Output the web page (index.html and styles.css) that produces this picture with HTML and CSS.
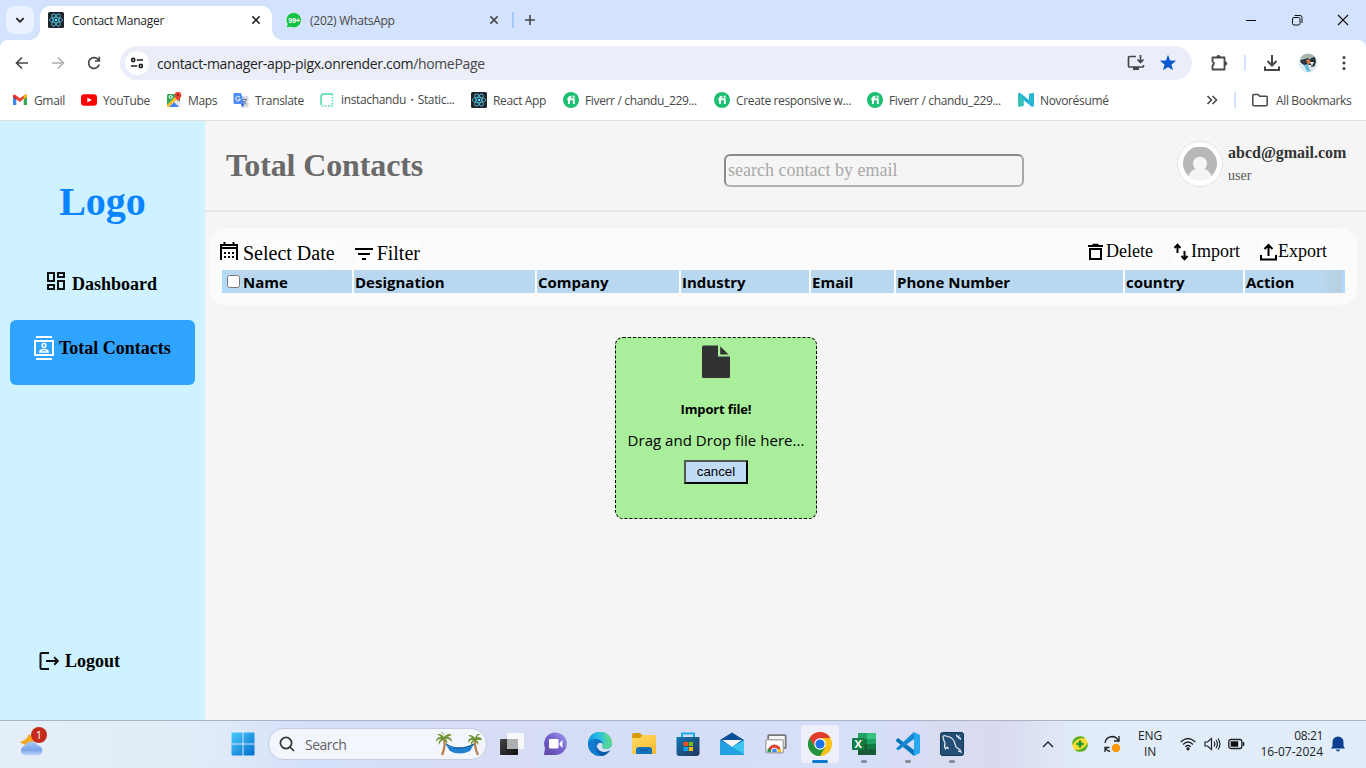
FILE: index.html
```html
<!DOCTYPE html>
<html lang="en">
<head>
<meta charset="utf-8">
<title>Contact Manager</title>
<link rel="stylesheet" href="styles.css">
</head>
<body>
<svg width="0" height="0" class="defs">
  <symbol id="react" viewBox="0 0 16 16"><rect width="16" height="16" rx="1.5" fill="#20232a"/><g fill="none" stroke="#4fb3cc" stroke-width=".9"><ellipse cx="8" cy="8" rx="6.7" ry="2.6"/><ellipse cx="8" cy="8" rx="6.7" ry="2.6" transform="rotate(60 8 8)"/><ellipse cx="8" cy="8" rx="6.7" ry="2.6" transform="rotate(120 8 8)"/></g><circle cx="8" cy="8" r="1.3" fill="#61dafb"/></symbol>
  <symbol id="fiverr" viewBox="0 0 16 16"><circle cx="8" cy="8" r="8" fill="#1dbf73"/><path d="M4.200 7.300h6.600V12M6 12V6.300q0-1.700 2.400-1.600" fill="none" stroke="#fff" stroke-width="1.900"/><circle cx="10.700" cy="4.700" r="1.100" fill="#fff"/></symbol>
</svg>

<header class="tabstrip">
  <div class="tab-search"><svg width="10" height="10" viewBox="0 0 10 10"><path d="M1.3 3.2 5 6.8l3.7-3.6" fill="none" stroke="#1f1f1f" stroke-width="1.8"/></svg></div>
  <div class="tab active">
    <svg width="16" height="16"><use href="#react"/></svg><span class="tab-title">Contact Manager</span>
    <svg class="close" width="10" height="10" viewBox="0 0 10 10"><path d="m1.4 1.4 7.2 7.2m0-7.2L1.4 8.6" stroke="#1f1f1f" stroke-width="1.5"/></svg>
  </div>
  <div class="tab idle">
    <svg width="16" height="16" viewBox="0 0 16 16"><path d="M.3 15.7 1.2 12A7.600 7.600 0 1 1 4.5 15Z" fill="#12c143" stroke="#fff" stroke-width=".6"/><text x="8" y="11" text-anchor="middle" class="wa-count">99+</text></svg><span class="tab-title">(202) WhatsApp</span>
    <svg class="close" width="10" height="10" viewBox="0 0 10 10"><path d="m1.4 1.4 7.2 7.2m0-7.2L1.4 8.6" stroke="#474747" stroke-width="1.5"/></svg>
  </div>
  <i class="tab-sep"></i>
  <svg width="12" height="12" viewBox="0 0 12 12"><path d="M6 1v10M1 6h10" stroke="#474747" stroke-width="1.6"/></svg>
  <div class="window-buttons">
    <svg width="12" height="12" viewBox="0 0 12 12"><path d="M1 6.5h10" stroke="#111"/></svg>
    <svg width="12" height="12" viewBox="0 0 12 12" fill="none" stroke="#111"><rect x="1.5" y="3.5" width="7.5" height="7.5" rx="1.5"/><path d="M3.5 1.5H9q2 0 2 2V9"/></svg>
    <svg width="12" height="12" viewBox="0 0 12 12"><path d="m1 1 10 10M11 1 1 11" stroke="#111" stroke-width="1.1"/></svg>
  </div>
</header>

<section class="browser">
  <div class="toolbar">
    <svg width="16" height="16" viewBox="0 0 16 16" fill="none" stroke="#474747" stroke-width="1.7"><path d="M14 8H3M8 2.5 2.5 8 8 13.5"/></svg>
    <svg width="16" height="16" viewBox="0 0 16 16" fill="none" stroke="#b0b0b0" stroke-width="1.6"><path d="M2 8h11M8 2.5 13.500 8 8 13.500"/></svg>
    <svg width="16" height="16" viewBox="0 0 16 16" fill="none" stroke="#474747" stroke-width="1.7"><path d="M13.200 9.500A5.400 5.400 0 1 1 12.500 5M13.300 1.800V6H9"/></svg>
    <div class="omnibox">
      <span class="site"><svg width="14" height="12" viewBox="0 0 14 12" fill="none" stroke="#1f1f1f" stroke-width="1.6"><circle cx="3.200" cy="3" r="1.600"/><path d="M6.800 3H13M1 9h6.200"/><circle cx="10.800" cy="9" r="1.600"/></svg></span>
      <span class="url">contact-manager-app-pigx.onrender.com<em>/homePage</em></span>
      <svg class="install" width="18" height="16" viewBox="0 0 18 16"><path d="M9 1.500H2.500a1 1 0 0 0-1 1v8.500a1 1 0 0 0 1 1h13a1 1 0 0 0 1-1V10M13.500 0v7M10.500 4.500l3 3 3-3" fill="none" stroke="#474747" stroke-width="1.700"/><path d="M6 12h6v3H6Z" fill="#474747"/></svg>
      <svg width="18" height="18" viewBox="0 0 18 18"><path d="m9 .8 2.100 5.700 6.100.2-4.800 3.800 1.700 5.800L9 12.900l-5.100 3.400 1.700-5.800L.8 6.700l6.100-.2Z" fill="#0b57d0"/></svg>
    </div>
    <svg class="puzzle" width="18" height="18" viewBox="0 0 18 18"><path d="M2.500 3.500h12v12h-12v-4q2.700-2 0-4Z" fill="none" stroke="#474747" stroke-width="1.800" stroke-linejoin="round"/><path d="M6.300 3.200q.2-2.200 2.200-2.200t2.200 2.200ZM15 7.300q2.300.2 2.300 2.200T15 11.700Z" fill="#474747"/></svg>
    <i class="bar-sep"></i>
    <svg class="download" width="18" height="18" viewBox="0 0 18 18" fill="none" stroke="#474747" stroke-width="2"><path d="M9 1v10M4.500 7 9 11.500 13.500 7M2 12.500v3.600h14v-3.600"/></svg>
    <svg class="profile" width="20" height="20" viewBox="0 0 20 20"><circle cx="10" cy="10" r="9.500" fill="#dcecf2"/><path d="M2 6Q5 0 11 .8q5 .6 6.500 5L9 5Z" fill="#a9b5a9"/><path d="m2 7 8-2 5 2 2 5-4 3-3-2-4-1-3-2Z" fill="#2c3540"/><path d="m8 7 3-1 2 4-3 2Z" fill="#d3794d"/><path d="m6 12 4-1 3 7-4 1Z" fill="#68bddc"/><path d="m13 5 4-1 1 5-2 5-3-4Z" fill="#26333d"/><path d="m12 9 2 4 2-4Z" fill="#eee"/><path d="m10 12 3 0 1 4-2 1Z" fill="#eef4f7"/></svg>
    <svg class="menu" width="16" height="16" viewBox="0 0 16 16" fill="#474747"><circle cx="8" cy="2.500" r="1.600"/><circle cx="8" cy="8" r="1.600"/><circle cx="8" cy="13.500" r="1.600"/></svg>
  </div>
  <nav class="bookmarks">
    <a class="w69"><svg width="16" height="16" viewBox="0 0 16 16"><path d="M1 13V4l3.300 2.500V13Z" fill="#4285f4"/><path d="M11.700 13V6.500L15 4v9Z" fill="#34a853"/><path d="M1 5V3.500Q2 1.800 3.600 3L8 6.300 12.400 3Q14 1.800 15 3.500L8 10 1 5Z" fill="#ea4335"/><path d="m11.700 3.500 1-.7Q15 2 15 4.500V5l-3.300 2.500Z" fill="#fbbc04"/><path d="M1 5V3.500l3.300 2.800v1.500Z" fill="#c5221f"/></svg><span>Gmail</span></a>
    <a class="w85"><svg width="16" height="16" viewBox="0 0 16 16"><rect y="2.300" width="16" height="11.400" rx="3" fill="#f00"/><path d="m6.300 5.500 4.500 2.500-4.500 2.500Z" fill="#fff"/></svg><span>YouTube</span></a>
    <a class="w67"><svg width="16" height="16" viewBox="0 0 16 16"><rect x="1" y="2" width="13" height="13" rx="1.500" fill="#34a853"/><path d="M1 15 10 5l4 5v5Z" fill="#e5e5e5"/><path d="m3 15 5-5 5 5Z" fill="#4285f4"/><path d="m1 13 8-8 2 2-8 8H1Z" fill="#fbc02d"/><circle cx="4.700" cy="5" r="1.500" fill="none" stroke="#fff"/><path d="M12 9Q8.500 5.500 8.700 3.200A3.300 3.300 0 0 1 15.300 3Q15.400 5.500 12 9Z" fill="#e94235"/><circle cx="12" cy="3.200" r="1.100" fill="#8b1c15"/></svg><span>Maps</span></a>
    <a class="w86"><svg width="16" height="16" viewBox="0 0 16 16"><path d="M7 4h7q1.500 0 1.500 1.500v9q0 1-1 1H9Z" fill="#dadce0"/><path d="M1.500 1H8l3.500 11H1.500Q.5 12 .5 11V2q0-1 1-1Z" fill="#4c8bf5"/><path d="m8 12 3.500 0L9 15.500Z" fill="#3367d6"/><path d="M7 5.200A2.300 2.300 0 1 0 7.400 7H5.300" fill="none" stroke="#fff"/><path d="M9.500 7.500H14M12 6.500v1M13.400 7.500Q12 11 9.800 12M10.500 9l3 3.500" fill="none" stroke="#718096"/></svg><span>Translate</span></a>
    <a class="w152"><svg width="16" height="16" viewBox="0 0 16 16" fill="none" stroke="#3fe0a2" stroke-width="1.500"><path d="M13.500 2H5Q2 2 2 5v8"/><path d="M13.500 2v12H2" stroke-dasharray="1.500 1.500"/></svg><span class="static">instachandu・Static...</span></a>
    <a class="w92"><svg width="16" height="16"><use href="#react"/></svg><span>React App</span></a>
    <a class="w151"><svg width="16" height="16"><use href="#fiverr"/></svg><span>Fiverr / chandu_229...</span></a>
    <a class="w153"><svg width="16" height="16"><use href="#fiverr"/></svg><span>Create responsive w...</span></a>
    <a class="w151"><svg width="16" height="16"><use href="#fiverr"/></svg><span>Fiverr / chandu_229...</span></a>
    <a class="w151"><svg width="16" height="16" viewBox="0 0 16 16"><path d="M0 2q1-2 3-.5L11 8V1.500l5-.5v13q-1 1.500-3 .2L5.500 8v6L0 14.500Z" fill="#25b7d3"/><path d="M0 2v12.500l5.500-.5V8Z" fill="#38c4b4"/></svg><span>Novorésumé</span></a>
    <svg class="more" width="12" height="10" viewBox="0 0 12 10"><path d="m1.500 1 4 4-4 4m5-8 4 4-4 4" fill="none" stroke="#474747" stroke-width="1.600"/></svg>
    <i class="bar-sep"></i>
    <a class="all"><svg width="16" height="16" viewBox="0 0 16 16"><path d="M.8 3.500q0-1 1-1h4.400l1.500 1.700h6.500q1 0 1 1v7.500q0 1-1 1H1.800q-1 0-1-1Z" fill="none" stroke="#474747" stroke-width="1.500"/></svg><span>All Bookmarks</span></a>
  </nav>
</section>

<div class="app">
  <aside class="sidebar">
    <div class="logo">Logo</div>
    <a class="nav dashboard"><svg width="20" height="20" viewBox="0 0 20 20" fill="none" stroke="#111" stroke-width="2"><path d="M2 2h6v8H2ZM12 2h6v4h-6ZM12 10h6v8h-6ZM2 14h6v4H2Z"/></svg><span>Dashboard</span></a>
    <a class="nav contacts"><svg width="20" height="24" viewBox="0 0 20 24" fill="none" stroke="#fff" stroke-width="2"><path d="M2 1h16M2 23h16M1 5h18v14H1Z"/><circle cx="10" cy="9.500" r="1.900" stroke-width="1.500"/><path d="M5.800 16q.4-2.400 4.200-2.400t4.200 2.400Z" stroke-width="1.500"/></svg><span>Total Contacts</span></a>
    <a class="nav logout"><svg width="20" height="20" viewBox="0 0 20 20" fill="none" stroke="#111" stroke-width="2"><path d="M10 2H2.500q-1 0-1 1v14q0 1 1 1H10M7 10h12M15.200 6.300 18.900 10l-3.700 3.700"/></svg><span>Logout</span></a>
  </aside>
  <main class="main">
    <header class="page-head">
      <h1>Total Contacts</h1>
      <input class="search" type="text" placeholder="search contact by email">
      <div class="user">
        <span class="avatar"><svg width="34" height="34" viewBox="0 0 34 34"><circle cx="17" cy="17" r="17" fill="#f5f5f5"/><path d="M5.500 29A17 17 0 1 1 28.500 29Q26.500 23.500 21.500 22a7 7 0 1 0-9 0Q7.500 23.500 5.500 29Z" fill="#b7b7b7"/></svg></span>
        <div class="who"><b>abcd@gmail.com</b><small>user</small></div>
      </div>
    </header>
    <section class="card">
      <div class="tools">
        <span class="tool date"><svg width="18" height="18" viewBox="0 0 18 18" fill="none" stroke="#000" stroke-width="2"><path d="M1 18V3h16v15M1 6h16M4.500 0v3M13.500 0v3"/><path d="M4 11h10M4 15h10" stroke-dasharray="2 2"/></svg>Select Date</span>
        <span class="tool filter"><svg width="18" height="14" viewBox="0 0 18 14" stroke="#000" stroke-width="2"><path d="M0 2h18M3 7h12M7 12h4"/></svg>Filter</span>
        <span class="tool delete"><svg width="15" height="18" viewBox="0 0 15 18" fill="none" stroke="#000" stroke-width="2"><path d="M2 6h11v10H2ZM0 3h15M4.500 1.800h6"/></svg>Delete</span>
        <span class="tool import"><svg width="18" height="18" viewBox="0 0 18 18" fill="none" stroke="#000" stroke-width="2"><path d="M4.500 10V2M1.500 5l3-3.200L7.500 5M11.500 8v8M8.500 13l3 3.200 3-3.200"/></svg>Import</span>
        <span class="tool export"><svg width="17" height="18" viewBox="0 0 17 18" fill="none" stroke="#000" stroke-width="2"><path d="M8.500 13V2M4.500 6l4-4 4 4M1 12v4.500h15V12"/></svg>Export</span>
      </div>
      <div class="thead">
        <div><input type="checkbox">Name</div><div>Designation</div><div>Company</div><div>Industry</div><div>Email</div><div>Phone Number</div><div>country</div><div>Action</div>
      </div>
    </section>
    <section class="dropzone">
      <svg width="28" height="33" viewBox="0 0 28 33"><path d="M1.500.5H16v11h12v20q0 1.500-1.500 1.500h-25Q0 33 0 31.500V2Q0 .5 1.500.5ZM18.200 1.300l8.300 8.300h-8.300Z" fill="#303234"/></svg>
      <h4>Import file!</h4>
      <p>Drag and Drop file here...</p>
      <button>cancel</button>
    </section>
  </main>
</div>

<footer class="taskbar">
  <div class="weather"><svg width="28" height="28" viewBox="0 0 28 28"><defs><linearGradient id="cl" x2="0" y2="1"><stop stop-color="#a9c8fa"/><stop offset=".6" stop-color="#7ba3ea"/><stop offset="1" stop-color="#c8dbfa"/></linearGradient></defs><path d="M2 12q7-2 9-8 6 4 5 14-8 1-9-3-2-1-5-3Z" fill="#f6a81c"/><path d="M7 25.500a5 5 0 0 1 0-9.800 7 7 0 0 1 12.500-.5A5.200 5.200 0 0 1 20 25.500Z" fill="url(#cl)"/></svg><b>1</b></div>
  <div class="start"><svg width="24" height="24" viewBox="0 0 24 24"><defs><linearGradient id="win" x2="1" y2="1"><stop stop-color="#4cc9fc"/><stop offset="1" stop-color="#006fcb"/></linearGradient></defs><path d="M.5 1.500q0-1 1-1h10v11H.5ZM12.500.5h10q1 0 1 1v10h-11ZM.5 12.500h11v11h-10q-1 0-1-1ZM12.500 12.500h11v10q0 1-1 1h-10Z" fill="url(#win)"/></svg></div>
  <div class="tsearch">
    <svg width="16" height="16" viewBox="0 0 16 16" fill="none" stroke="#333" stroke-width="1.700"><circle cx="7" cy="7" r="5.600"/><path d="m11 11 4 4"/></svg><span>Search</span>
    <svg class="palms" width="46" height="26" viewBox="0 0 46 26"><path d="M8 7q2 8-2 17M40 7q-3 6 2 17" fill="none" stroke="#b98050" stroke-width="2.300"/><path d="M10 14q5 3 13 3t15-4l-4 7q-11 5-20 0Z" fill="#2180cf"/><path d="M10 13q12 8 28 0" stroke="#0c579b" fill="none" stroke-width="1.300"/><path d="M8 6Q4 1 1 4q3 0 4 2Q0 6 0 11q3-4 5-3-3 2-2 6 2-5 5-5 2 2 3 4 1-4-2-5 4-1 7 3 0-5-5-5l5-2q-4-3-8 2Q8 1 5 1q3 2 3 5Zm31 1q-4-5-7-2 3 0 4 2-4 0-4 5 3-4 5-3-3 2-2 6 2-5 4-5 2 2 3 4 1-4-2-5h6q0-3-5-3 1-3 4-2-4-3-6 3Z" fill="#6f942f"/></svg>
  </div>
  <div class="apps">
    <span><svg width="24" height="24" viewBox="0 0 24 24"><defs><linearGradient id="tv" x2="1" y2="1"><stop stop-color="#444"/><stop offset="1" stop-color="#111"/></linearGradient></defs><rect x="7" y="1" width="17" height="16" rx="1" fill="#f8f8f8"/><rect x="0" y="7" width="18" height="16" rx="1" fill="url(#tv)"/><path d="M7 7h11v10H7Z" fill="#aeb1b3"/></svg></span>
    <span><svg width="24" height="24" viewBox="0 0 24 24"><defs><linearGradient id="ch" x1="1" x2="0" y2="1"><stop stop-color="#9aa0ed"/><stop offset=".5" stop-color="#7660cc"/><stop offset="1" stop-color="#5c45a2"/></linearGradient></defs><path d="M0 23 1 16A11.300 11.300 0 1 1 12 23Z" fill="url(#ch)"/><rect x="5" y="7" width="9.500" height="9.500" rx="1" fill="#fff"/><path d="m15.500 11 3-3v8l-3-3Z" fill="#fff"/></svg></span>
    <span><svg width="24" height="24" viewBox="0 0 24 24"><defs><linearGradient id="ed" x1="0" y1=".5" x2="1" y2=".3"><stop stop-color="#1496dd"/><stop offset=".5" stop-color="#2bbee4"/><stop offset="1" stop-color="#67e36f"/></linearGradient></defs><circle cx="12" cy="12" r="12" fill="#1473c6"/><path d="M0 12A12 12 0 0 1 24 11q0 6-7 6-4-1-2-4Q14 7 8 7 2 7 0 12Z" fill="url(#ed)"/><path d="M24 12q0 5-7 5-4-1-2-4-1-3-4-2-3 2-2 5 2 4 8 4 4 0 6-2l3 3V12Z" fill="#d6e0f8"/><path d="M24 10q0 7-7 7-4-1-2-4l3-3Z" fill="#50d69b"/><path d="M0 12q2-5 8-4-3 3-2 8 2 5 8 8Q1 24 0 12Z" fill="#117dce"/><path d="M9 15q2 6 8 5 3 0 5-2-3 5-8 6-6-2-5-9Z" fill="#0c59a4"/></svg></span>
    <span><svg width="24" height="24" viewBox="0 0 24 24"><defs><linearGradient id="fo" x2="1" y2="1"><stop stop-color="#ffdc66"/><stop offset="1" stop-color="#fcb92a"/></linearGradient></defs><path d="M0 3q0-2 2-2h6l3 3v3H0Z" fill="#d99a0b"/><path d="M0 6h8l3-3h13v19H0Z" fill="url(#fo)"/><path d="M4 22v-4q0-3 3-3h10q3 0 3 3v4Z" fill="#1174bd"/><path d="M8 18h8" stroke="#0c5a98" stroke-width="1.500"/></svg></span>
    <span><svg width="24" height="24" viewBox="0 0 24 24"><defs><linearGradient id="st" x2="1" y2="1"><stop stop-color="#0e79b5"/><stop offset="1" stop-color="#263458"/></linearGradient></defs><path d="M6 7V1.500h12V7" fill="none" stroke="#1baae6" stroke-width="2"/><path d="M.5 5h23v16q0 3-3 3h-17q-3 0-3-3Z" fill="url(#st)"/><path d="M7.500 10H12v4H7.500Z" fill="#f25022"/><path d="M12.800 10H17v4h-4.200Z" fill="#7fba00"/><path d="M7.500 15H12v4H7.500Z" fill="#00a4ef"/><path d="M12.800 15H17v4h-4.200Z" fill="#ffb900"/></svg></span>
    <span><svg width="24" height="24" viewBox="0 0 24 24"><path d="M0 8 12 .5 24 8v6H0Z" fill="#0b4f99"/><path d="M2 8h20L12 15Z" fill="#f6f6f6"/><path d="m0 8 12 7 12-7v15H0Z" fill="#3bc7f1"/><path d="m0 8 24 14v1H0Z" fill="#23a0e0"/></svg></span>
    <span><svg width="24" height="24" viewBox="0 0 24 24"><defs><clipPath id="rd"><path d="M3 8h16v12H3Z"/></clipPath></defs><rect x="4.200" y="3.200" width="17.500" height="13" rx="1" fill="#f5f5f5" stroke="#777" stroke-width="1.800"/><rect x="1.800" y="7.800" width="17.500" height="13" rx="1" fill="#fff" stroke="#aaa" stroke-width="1.500"/><g clip-path="url(#rd)"><circle cx="10.500" cy="19" r="6.500" fill="#df4335"/><path d="M4 16l6 5H3Z" fill="#24994b"/><path d="M11 17h6v4h-6Z" fill="#fbbc04"/><circle cx="10.500" cy="19" r="3" fill="#4285f4" stroke="#fff"/></g></svg></span>
    <span class="current"><svg width="24" height="24" viewBox="0 0 24 24"><circle cx="12" cy="12" r="12" fill="#fbc116"/><path d="M1.600 6A12 12 0 0 1 22.400 6H12L7 15Z" fill="#e33b2e"/><path d="M1.600 6A12 12 0 0 0 12 24l5.200-9H7Z" fill="#229342"/><circle cx="12" cy="12" r="5.800" fill="#fff"/><circle cx="12" cy="12" r="4.600" fill="#1a73e8"/></svg></span>
    <span class="running"><svg width="24" height="24" viewBox="0 0 24 24"><path d="M6 1h9v6H6Z" fill="#21a366"/><path d="M15 1h9v6h-9Z" fill="#33c481"/><path d="M6 7h9v5H6Z" fill="#107c41"/><path d="M15 7h9v5h-9Z" fill="#21a366"/><path d="M6 12h18v11H6Z" fill="#185c37"/><path d="M15 12h9v5h-9Z" fill="#107c41"/><rect y="6" width="12.500" height="12" rx="1" fill="#107c41"/><text x="6.200" y="15.800" text-anchor="middle" class="excel-x">X</text></svg></span>
    <span class="running"><svg width="24" height="24" viewBox="0 0 24 24"><path d="m0 8 2-2 16 12v6L0 9Z" fill="#0874bd"/><path d="M18 0v7L2 18.500l-2-2L18 0Z" fill="#1688d4"/><path d="m18 0 6 3v18l-6 3Z" fill="#2aa8ef"/></svg></span>
    <span class="running"><svg width="24" height="24" viewBox="0 0 24 24"><rect x=".5" y=".5" width="23" height="23" rx="2" fill="#244e73" stroke="#153651"/><path d="M7 15 5.500 17Q4 15 5 11 3 7 3 5q0-2 3-1 6 1 8 5 1 3 2 6l4 3 1 2-3-1M7 15q1 1 1.500 2" fill="none" stroke="#e6edf3" stroke-width="1.200"/><path d="M16 2v2l2 2 1 1 2 1V6l-2-1 1-2-2 1Z" fill="#dbe7f1"/></svg></span>
  </div>
  <div class="tray">
    <span><svg width="12" height="8" viewBox="0 0 12 8"><path d="m1 7 5-5 5 5" fill="none" stroke="#222" stroke-width="1.400"/></svg></span>
    <span><svg width="16" height="16" viewBox="0 0 16 16"><circle cx="8" cy="8" r="7.800" fill="#f7dc30"/><path d="M.2 9Q-.3 1 8 .2q4 0 5.500 2Q5 1 .2 9ZM15.800 7q.5 8-7.800 8.800-4 0-5.500-2Q11 15 15.800 7Z" fill="#53ad31"/><path d="M8 4.500v7M4.500 8h7" stroke="#18992b" stroke-width="2.400"/></svg></span>
    <span><svg width="18" height="18" viewBox="0 0 18 18" fill="none" stroke="#222" stroke-width="1.300"><path d="M2 8Q3 2 9 1.500q4 0 6.500 4M16 1v5h-5M7 16.500q-3-.5-4-3M2 17v-4.500h4.500"/><circle cx="13" cy="13" r="4.200" fill="#ff9800" stroke="none"/></svg></span>
    <span class="lang">ENG<br>IN</span>
    <span class="sys"><svg width="16" height="14" viewBox="0 0 16 14" fill="none" stroke="#222" stroke-width="1.300"><path d="M.7 5Q8-2 15.300 5M3 7.500q5-5 10 0M5.300 9.800q2.700-2.500 5.400 0"/><circle cx="8" cy="11.800" r="1" fill="#222"/></svg></span>
    <span class="sys"><svg width="17" height="14" viewBox="0 0 17 14" fill="none" stroke="#222" stroke-width="1.200"><path d="M1 5h2.500l4-3.500v11L3.500 9H1ZM10 4.500q1.500 2.500 0 5M12 3q2.800 4 0 8M14 1.500q3.800 5.500 0 11"/></svg></span>
    <span class="sys"><svg width="17" height="12" viewBox="0 0 17 12"><rect x=".8" y="1.500" width="13" height="9" rx="2" fill="none" stroke="#222" stroke-width="1.300"/><rect x="2.700" y="3.300" width="7.500" height="5.400" fill="#111"/><path d="M15.500 4v4" stroke="#222" stroke-width="1.500"/></svg></span>
    <span class="clock">08:21<br><em>16-07-2024</em></span>
    <svg class="bell" width="14" height="16" viewBox="0 0 14 16"><path d="M1.500 6a5.500 5.500 0 0 1 11 0v4l1.500 2.500H0L1.500 10ZM5 13.500h4q-.3 2-2 2t-2-2Z" fill="#0b3f91"/></svg>
  </div>
</footer>
</body>
</html>
```
FILE: styles.css
```css
* { box-sizing: border-box; }
body { margin: 0; width: 1366px; height: 768px; overflow: hidden; display: flex; flex-direction: column; background: #d3e3fd; font-family: "Open Sans", "Noto Sans", sans-serif; }
svg { flex: none; display: block; }
.defs { position: absolute; }

/* tab strip */
.tabstrip { height: 40px; flex: none; display: flex; align-items: center; font-size: 12px; color: #1f1f1f; }
.tab-search { width: 28px; height: 28px; margin-left: 6px; border-radius: 9px; background: #ebf1fe; display: flex; align-items: center; justify-content: center; }
.tab { display: flex; align-items: center; }
.tab.active { position: relative; width: 232px; height: 34px; margin: 6px 0 0 6px; padding: 0 11px 6px 8px; background: #fff; border-radius: 10px 10px 0 0; }
.tab.active::before, .tab.active::after { content: ""; position: absolute; bottom: 0; width: 10px; height: 10px; }
.tab.active::before { left: -10px; background: radial-gradient(circle at 0 0, transparent 9.500px, #fff 10px); }
.tab.active::after { right: -10px; background: radial-gradient(circle at 100% 0, transparent 9.500px, #fff 10px); }
.tab.idle { width: 213px; margin-left: 14px; color: #474747; }
.tab-title { margin-left: 8px; letter-spacing: -.25px; white-space: nowrap; }
.close { margin-left: auto; }
.wa-count { font: bold 7.500px "Liberation Sans", sans-serif; fill: #fff; letter-spacing: -.4px; }
.tab-sep { width: 2px; height: 16px; background: #a8c7fa; margin: 0 10px 0 13px; }
.window-buttons { display: flex; gap: 34px; margin-left: auto; margin-right: 17px; }

/* toolbar and bookmarks */
.browser { height: 81px; flex: none; background: #fff; border-radius: 8px 8px 0 0; border-bottom: 1px solid #dedfe1; }
.toolbar { height: 46px; display: flex; align-items: center; padding-left: 14px; gap: 20px; }
.omnibox { width: 1072px; height: 34px; margin-left: -2px; border-radius: 17px; background: #ebeef8; display: flex; align-items: center; padding: 0 15px 0 5px; }
.site { width: 24px; height: 24px; border-radius: 50%; background: #fff; display: flex; align-items: center; justify-content: center; }
.url { margin-left: 8px; font-size: 14px; letter-spacing: -.34px; color: #1f1f1f; white-space: nowrap; }
.url em { font-style: normal; color: #474747; }
.install { margin-left: auto; margin-right: 14px; }
.puzzle { margin-left: -2px; }
.bar-sep { width: 2px; height: 16px; background: #d3e3fd; }
.toolbar .bar-sep { margin-left: -4px; }
.download { margin-left: -3px; }
.profile { margin-left: -3px; }
.menu { margin-left: -2px; }
.bookmarks { height: 28px; display: flex; align-items: center; padding-left: 12px; font-size: 12px; color: #474747; }
.bookmarks a { display: flex; align-items: center; gap: 6px; white-space: nowrap; letter-spacing: -.35px; }
.bookmarks .static { line-height: 16px; height: 16px; }
.w67 { width: 67px; } .w69 { width: 69px; } .w85 { width: 85px; } .w86 { width: 86px; } .w92 { width: 92px; }
.w151 { width: 151px; } .w152 { width: 152px; } .w153 { width: 153px; }
.more { margin-left: 37px; }
.bookmarks .bar-sep { margin: 0 16px 0 16px; }
.bookmarks .all { gap: 8px; }

/* application */
.app { height: 599px; flex: none; display: flex; font-family: "Liberation Serif", serif; background: #f5f5f5; }
.sidebar { width: 205px; background: #cef2ff; display: flex; flex-direction: column; }
.logo { height: 46px; margin-top: 58px; text-align: center; font-size: 40px; line-height: 46px; font-weight: bold; color: #0a84ff; }
.nav { display: flex; font-size: 18px; line-height: 20px; font-weight: bold; color: #000; }
.nav.dashboard { margin: 46px 0 0 46px; gap: 6px; height: 24px; }
.nav.dashboard span { margin-top: 3px; }
.nav.contacts { margin: 25px 10px 0; height: 65px; padding: 16px 0 0 24px; gap: 5px; background: #2ea4ff; border-radius: 6px; }
.nav.contacts span { margin-top: 2px; }
.nav.logout { margin: auto 0 49px 39px; gap: 6px; }
.main { flex: 1; min-width: 0; }
.page-head { height: 91px; border-bottom: 2px solid #e8e8e8; padding-left: 21px; display: flex; align-items: flex-start; }
.page-head h1 { width: 498px; margin: 26px 0 0; font-size: 32px; line-height: 37px; letter-spacing: -.12px; color: #6a6a6a; }
.search { width: 300px; height: 33px; margin-top: 33px; padding: 1px 2px; border: 2px solid; border-color: #8a8a8a #a8a8a8 #b0b0b0 #8a8a8a; border-radius: 6px; background: transparent; font: 18px "Liberation Serif", serif; }
.search::placeholder { color: #a9a9a9; }
.user { display: flex; margin: 20px 0 0 153px; gap: 5px; }
.avatar { width: 46px; height: 46px; border-radius: 50%; border: 1px solid #e9e1e3; background: #fff; display: flex; align-items: center; justify-content: center; }
.who { display: flex; flex-direction: column; color: #333; }
.who b { font-size: 16px; line-height: 18px; margin-top: 3px; }
.who small { font-size: 14px; line-height: 16px; margin-top: 6px; color: #555; }
.card { width: 1147px; height: 77px; margin: 16px 0 0 5px; padding: 10px 12px 0; border-radius: 16px; background: #fbfbfb; }
.tools { display: flex; align-items: flex-start; height: 32px; margin: 0 18px 0 -2px; }
.tool { background: #fdfdfd; display: flex; align-items: center; font-size: 18px; height: 27px; white-space: nowrap; }
.tool.date, .tool.filter { font-size: 20px; height: 31px; }
.date { gap: 5px; }
.date svg { margin-bottom: 5px; }
.filter { gap: 4px; margin-left: 20px; }
.delete { margin-left: auto; gap: 3px; }
.import { margin-left: 20px; }
.export { margin-left: 20px; gap: 1px; }
.thead { display: grid; grid-template-columns: 130px 181px 142px 128px 83px 227px 118px 100px; column-gap: 2px; height: 23px; }
.thead div { height: 23px; background: #b9d8f0; font: bold 15px/21px "Open Sans", sans-serif; padding: 2px 0 0 1px; display: flex; align-items: center; white-space: nowrap; }
.thead div:first-child { padding-left: 5px; background: linear-gradient(90deg, #b0daf8, #b9d8ef 15px); }
.thead div:last-child { background: linear-gradient(90deg, #b9d8f0 75%, #b8cfdf 96%, #afdcff 98%); }
.thead input { width: 13px; height: 13px; margin: 0 3px 2px 0; }
.dropzone { width: 202px; height: 182px; margin: 32px 0 0 410px; padding-top: 7px; display: flex; flex-direction: column; align-items: center; background: #a9ee9b; border: 1px dashed #000; border-radius: 8px; font-family: "Open Sans", sans-serif; }
.dropzone h4 { margin: 22px 0 0; font-size: 13px; line-height: 18px; letter-spacing: -.15px; }
.dropzone p { margin: 11px 0 0; font-size: 15px; line-height: 22px; letter-spacing: .03px; white-space: nowrap; }
.dropzone button { width: 64px; height: 24px; margin-top: 9px; padding: 0; border: 2px outset #000; border-color: #555 #000 #000 #555; background: #c0dcf5; color: #000; font: 13.300px/18px "Liberation Sans", sans-serif; }

/* taskbar */
.taskbar { height: 48px; flex: none; border-top: 1px solid #abb3c4; padding-bottom: 1px; display: flex; align-items: center; background: linear-gradient(90deg, #e4eff8 0, #e2ecf8 200px, #d4e0fa 310px, #d6ddf4 450px, #d5dff7 850px, #d9daf0 1000px, #e1ecf8 1080px, #e1eef9 100%); color: #222; }
.weather { position: relative; width: 28px; margin-left: 18px; }
.weather b { position: absolute; left: 13px; top: -3px; width: 16px; height: 16px; border-radius: 50%; background: #c42b1c; color: #fff; text-align: center; font: 11px/16px "Open Sans", sans-serif; }
.start { margin-left: 185px; }
.tsearch { width: 219px; height: 32px; margin-left: 13px; padding: 0 4px 0 10px; border: 1px solid #c3cce2; border-radius: 16px; background: #f3f6fd; display: flex; align-items: center; font-size: 14px; color: #626262; }
.tsearch span { margin-left: 10px; letter-spacing: -.5px; }
.palms { margin-left: auto; }
.apps { display: flex; margin-left: 3px; }
.apps span { position: relative; width: 44px; height: 46px; display: flex; align-items: center; justify-content: center; }
.apps .current::before { content: ""; position: absolute; left: 3px; top: 4px; width: 38px; height: 38px; border-radius: 4px; background: #edf0fa; }
.apps .current svg { position: relative; }
.apps .current::after, .apps .running::after { content: ""; position: absolute; bottom: 4px; border-radius: 2px; height: 3px; }
.apps .current::after { width: 16px; background: #0078d4; }
.apps .running::after { width: 6px; background: #868b97; }
.excel-x { font: bold 11px "Open Sans", sans-serif; fill: #fff; }
.tray { display: flex; align-items: center; margin-left: auto; width: 334px; font-size: 12px; line-height: 16px; }
.tray span { width: 32px; display: flex; justify-content: center; }
.tray .lang { display: block; width: 44px; text-align: center; letter-spacing: -.2px; }
.tray .sys { width: 24px; }
.tray .sys:nth-child(5) { margin-left: 4px; }
.tray .clock { display: block; width: 75px; text-align: right; letter-spacing: -.35px; }
.tray .clock em { font-style: normal; letter-spacing: 0; }
.bell { margin-left: 8px; }
```
